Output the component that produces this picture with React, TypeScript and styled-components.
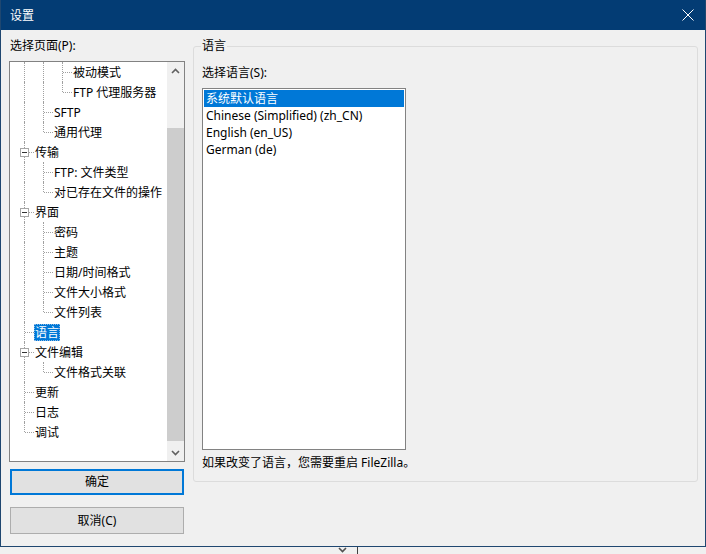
import React from 'react';
import styled, { createGlobalStyle } from 'styled-components';

const GlobalStyle = createGlobalStyle`
  html, body {
    margin: 0;
    padding: 0;
    background: #f0f0f0;
  }
  body {
    font-family: "Noto Sans", "Noto Sans CJK SC", sans-serif;
    font-size: 12px;
    color: #000;
  }
`;

type Guide = 'pass' | 'tee' | 'ell' | 'blank';

interface TreeRow {
  label: string;
  guides: Guide[];
  expander?: boolean;
  selected?: boolean;
}

// guides: one entry per indent column, the last one is the row's own connector
const treeRows: TreeRow[] = [
  { label: '被动模式', guides: ['pass', 'pass', 'tee'] },
  { label: 'FTP 代理服务器', guides: ['pass', 'pass', 'ell'] },
  { label: 'SFTP', guides: ['pass', 'tee'] },
  { label: '通用代理', guides: ['pass', 'ell'] },
  { label: '传输', guides: ['tee'], expander: true },
  { label: 'FTP: 文件类型', guides: ['pass', 'tee'] },
  { label: '对已存在文件的操作', guides: ['pass', 'ell'] },
  { label: '界面', guides: ['tee'], expander: true },
  { label: '密码', guides: ['pass', 'tee'] },
  { label: '主题', guides: ['pass', 'tee'] },
  { label: '日期/时间格式', guides: ['pass', 'tee'] },
  { label: '文件大小格式', guides: ['pass', 'tee'] },
  { label: '文件列表', guides: ['pass', 'ell'] },
  { label: '语言', guides: ['tee'], selected: true },
  { label: '文件编辑', guides: ['tee'], expander: true },
  { label: '文件格式关联', guides: ['pass', 'ell'] },
  { label: '更新', guides: ['tee'] },
  { label: '日志', guides: ['tee'] },
  { label: '调试', guides: ['ell'] },
];

const languages = [
  '系统默认语言',
  'Chinese (Simplified) (zh_CN)',
  'English (en_US)',
  'German (de)',
];

const Page = styled.div`
  width: 706px;
  height: 554px;
  display: flex;
  flex-direction: column;
  overflow: hidden;
`;

const Window = styled.div`
  height: 547px;
  box-sizing: border-box;
  border: 1px solid #1f4770;
  border-top: none;
  background: #f0f0f0;
  display: flex;
  flex-direction: column;
`;

const TitleBar = styled.div`
  height: 30px;
  flex: none;
  background: #033c74;
  color: #fff;
  display: flex;
  align-items: center;
  justify-content: space-between;
  padding: 0 10px 0 9px;
  font-size: 12px;
`;

const CloseGlyph = styled.svg`
  width: 12px;
  height: 12px;
  margin-right: 1px;
`;

const Body = styled.div`
  flex: 1;
  display: flex;
  gap: 8px;
  padding: 8px 7px 0 8px;
`;

const LeftColumn = styled.div`
  width: 176px;
  display: flex;
  flex-direction: column;
`;

const Caption = styled.div`
  line-height: 16px;
  height: 16px;
  padding-left: 1px;
`;

const TreeBox = styled.div`
  margin-top: 7px;
  height: 401px;
  box-sizing: border-box;
  border: 1px solid #828282;
  background: #fff;
  display: flex;
`;

const TreeRows = styled.div`
  flex: 1;
  padding-left: 5px;
  display: flex;
  flex-direction: column;
`;

const Row = styled.div`
  height: 20px;
  display: flex;
  align-items: center;
`;

const GuideCell = styled.span<{ $kind: Guide }>`
  position: relative;
  width: 19px;
  height: 20px;
  flex: none;

  &::before {
    content: '';
    display: ${(p) => (p.$kind === 'blank' ? 'none' : 'block')};
    position: absolute;
    left: 9px;
    top: 0;
    height: ${(p) => (p.$kind === 'ell' ? '10px' : '20px')};
    border-left: 1px dotted #a0a0a0;
  }

  &::after {
    content: '';
    display: ${(p) => (p.$kind === 'tee' || p.$kind === 'ell' ? 'block' : 'none')};
    position: absolute;
    left: 10px;
    top: 10px;
    width: 9px;
    border-top: 1px dotted #a0a0a0;
  }
`;

const Expander = styled.span`
  position: absolute;
  left: 5px;
  top: 6px;
  width: 7px;
  height: 7px;
  border: 1px solid #a6a6a6;
  background: #fff;
  z-index: 1;

  &::before {
    content: '';
    position: absolute;
    left: 1px;
    top: 3px;
    width: 5px;
    height: 1px;
    background: #333;
  }
`;

const RowLabel = styled.span<{ $selected?: boolean }>`
  line-height: 17px;
  padding: 0 1px;
  white-space: nowrap;
  background: ${(p) => (p.$selected ? '#0078d7' : 'transparent')};
  color: ${(p) => (p.$selected ? '#fff' : '#000')};
  outline: ${(p) => (p.$selected ? '1px dotted #8ab8e6' : 'none')};
  outline-offset: -1px;
`;

const ScrollBar = styled.div`
  width: 17px;
  flex: none;
  background: #f0f0f0;
  display: flex;
  flex-direction: column;
`;

const ScrollArrow = styled.div`
  height: 17px;
  flex: none;
  display: flex;
  align-items: center;
  justify-content: center;
`;

const ScrollTrack = styled.div`
  flex: 1;
  display: flex;
  flex-direction: column;
`;

const ScrollThumb = styled.div<{ $offset: number; $size: number }>`
  margin-top: ${(p) => p.$offset}px;
  height: ${(p) => p.$size}px;
  background: #cdcdcd;
`;

const DialogButton = styled.button<{ $default?: boolean }>`
  margin-left: 1px;
  width: 174px;
  height: ${(p) => (p.$default ? '26px' : '27px')};
  margin-top: ${(p) => (p.$default ? '7px' : '12px')};
  box-sizing: border-box;
  background: #e1e1e1;
  border: ${(p) => (p.$default ? '2px solid #0078d7' : '1px solid #adadad')};
  font: inherit;
  font-size: 12px;
  color: #000;
  padding: 0;
  line-height: 16px;
`;

const GroupBox = styled.fieldset`
  margin: 0;
  min-inline-size: 0;
  width: 505px;
  height: 444px;
  box-sizing: border-box;
  border: 1px solid #dcdcdc;
  border-radius: 3px;
  padding: 0 8px 0 8px;
  display: flex;
  flex-direction: column;
`;

const GroupLegend = styled.legend`
  line-height: 16px;
  padding: 0 1px;
  margin-left: -1px;
`;

const FieldCaption = styled.div`
  margin-top: 11px;
  line-height: 16px;
`;

const ListBox = styled.div`
  margin-top: 7px;
  width: 204px;
  height: 362px;
  box-sizing: border-box;
  border: 1px solid #828282;
  background: #fff;
  padding: 1px;
  display: flex;
  flex-direction: column;
`;

const ListItem = styled.div<{ $selected?: boolean }>`
  height: 17px;
  line-height: 17px;
  padding-left: 2px;
  white-space: nowrap;
  background: ${(p) => (p.$selected ? '#0078d7' : 'transparent')};
  color: ${(p) => (p.$selected ? '#fff' : '#000')};
`;

const Note = styled.div`
  margin-top: 5px;
  line-height: 16px;
`;

const Backdrop = styled.div`
  flex: 1;
  display: flex;
  align-items: flex-start;
  padding-left: 338px;
  gap: 10px;
`;

const BackdropDivider = styled.div`
  width: 1px;
  height: 7px;
  background: #404040;
`;

const Chevron: React.FC<{ up?: boolean; color?: string }> = ({ up, color = '#606060' }) => (
  <svg width="9" height="6" viewBox="0 0 9 6">
    <polyline
      points={up ? '1,5 4.5,1.5 8,5' : '1,1 4.5,4.5 8,1'}
      fill="none"
      stroke={color}
      strokeWidth="1.6"
    />
  </svg>
);

const App: React.FC = () => {
  return (
    <Page>
      <GlobalStyle />
      <Window>
        <TitleBar>
          <span>设置</span>
          <CloseGlyph viewBox="0 0 12 12">
            <line x1="0.5" y1="0.5" x2="11.5" y2="11.5" stroke="#fff" strokeWidth="1" />
            <line x1="11.5" y1="0.5" x2="0.5" y2="11.5" stroke="#fff" strokeWidth="1" />
          </CloseGlyph>
        </TitleBar>
        <Body>
          <LeftColumn>
            <Caption>选择页面(P):</Caption>
            <TreeBox>
              <TreeRows>
                {treeRows.map((row) => (
                  <Row key={row.label}>
                    {row.guides.map((g, i) => (
                      <GuideCell key={i} $kind={g}>
                        {row.expander && i === row.guides.length - 1 && <Expander />}
                      </GuideCell>
                    ))}
                    <RowLabel $selected={row.selected}>{row.label}</RowLabel>
                  </Row>
                ))}
              </TreeRows>
              <ScrollBar>
                <ScrollArrow>
                  <Chevron up />
                </ScrollArrow>
                <ScrollTrack>
                  <ScrollThumb $offset={49} $size={313} />
                </ScrollTrack>
                <ScrollArrow>
                  <Chevron />
                </ScrollArrow>
              </ScrollBar>
            </TreeBox>
            <DialogButton $default>确定</DialogButton>
            <DialogButton>取消(C)</DialogButton>
          </LeftColumn>
          <GroupBox>
            <GroupLegend>语言</GroupLegend>
            <FieldCaption>选择语言(S):</FieldCaption>
            <ListBox>
              {languages.map((lang, i) => (
                <ListItem key={lang} $selected={i === 0}>
                  {lang}
                </ListItem>
              ))}
            </ListBox>
            <Note>如果改变了语言，您需要重启 FileZilla。</Note>
          </GroupBox>
        </Body>
      </Window>
      <Backdrop>
        <Chevron color="#505050" />
        <BackdropDivider />
      </Backdrop>
    </Page>
  );
};

export default App;
